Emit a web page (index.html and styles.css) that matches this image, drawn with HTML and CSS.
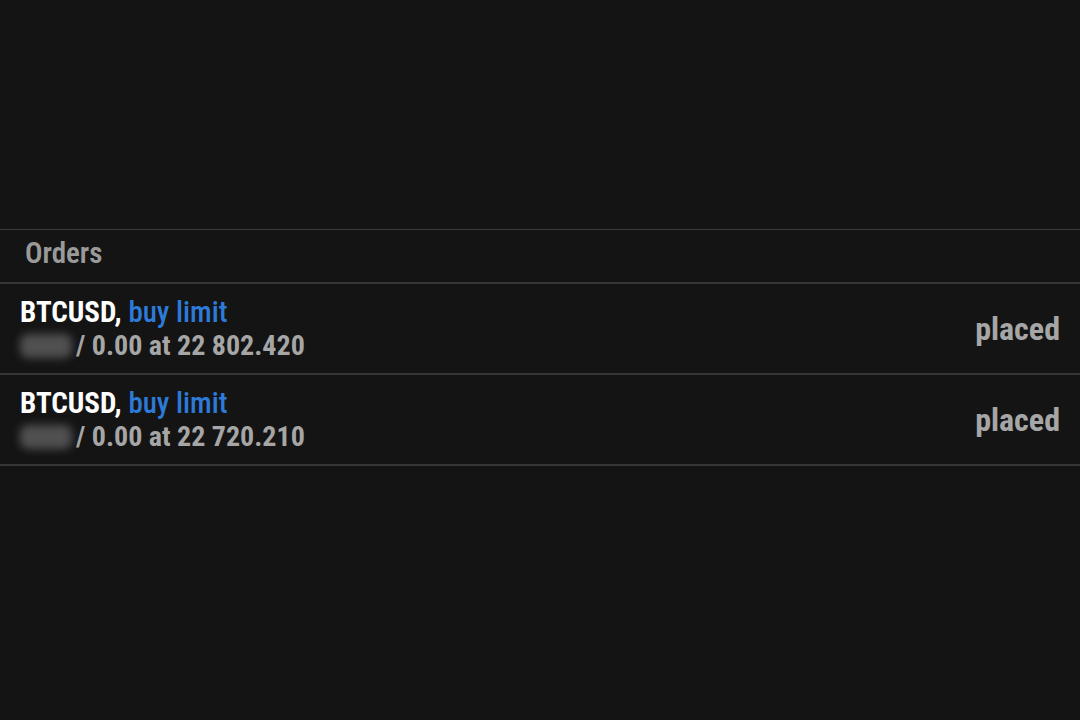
FILE: index.html
```html
<!DOCTYPE html>
<html lang="en">
<head>
    <meta charset="UTF-8">
    <meta name="viewport" content="width=device-width, initial-scale=1.0">
    <title>Orders</title>
    <link rel="stylesheet" href="styles.css">
</head>
<body>

<div class="top-space"></div>

<section class="orders">
    <div class="orders-header">Orders</div>

    <div class="order-row">
        <div class="order-info">
            <div class="order-title">BTCUSD, <span class="order-type">buy limit</span></div>
            <div class="order-detail"><span class="hidden-volume"></span>/ 0.00 at 22 802.420</div>
        </div>
        <div class="order-state">placed</div>
    </div>

    <div class="order-row">
        <div class="order-info">
            <div class="order-title">BTCUSD, <span class="order-type">buy limit</span></div>
            <div class="order-detail"><span class="hidden-volume"></span>/ 0.00 at 22 720.210</div>
        </div>
        <div class="order-state">placed</div>
    </div>
</section>

</body>
</html>
```

FILE: styles.css
```css
body {
    margin: 0;
    padding: 0;
    background-color: #141414;
    font-family: Roboto, "Liberation Sans", sans-serif;
    font-weight: 700;
    font-stretch: condensed;
    color: #fff;
    height: 720px;
    overflow: hidden;
}
.top-space {
    height: 229px;
}
.orders {
    border-top: 1px solid #3a3a3a;
}
.orders-header {
    height: 45px;
    padding-left: 25px;
    padding-bottom: 7px;
    display: flex;
    align-items: center;
    font-size: 29px;
    font-weight: 600;
    color: #9a9a9a;
    border-bottom: 2px solid #363636;
}
.order-row {
    height: 89px;
    display: flex;
    align-items: center;
    justify-content: space-between;
    padding: 0 20px;
    border-bottom: 2px solid #363636;
}
.order-title {
    font-size: 29px;
    line-height: 34px;
    color: #fff;
}
.order-type {
    color: #2d7ad9;
    font-weight: 500;
}
.order-detail {
    font-size: 28px;
    line-height: 34px;
    color: #a6a6a6;
}
.hidden-volume {
    display: inline-block;
    width: 52px;
    height: 24px;
    margin-right: 4px;
    vertical-align: -3px;
    border-radius: 8px;
    background-color: #505050;
    filter: blur(4px);
}
.order-state {
    font-size: 32px;
    color: #a6a6a6;
}
```
